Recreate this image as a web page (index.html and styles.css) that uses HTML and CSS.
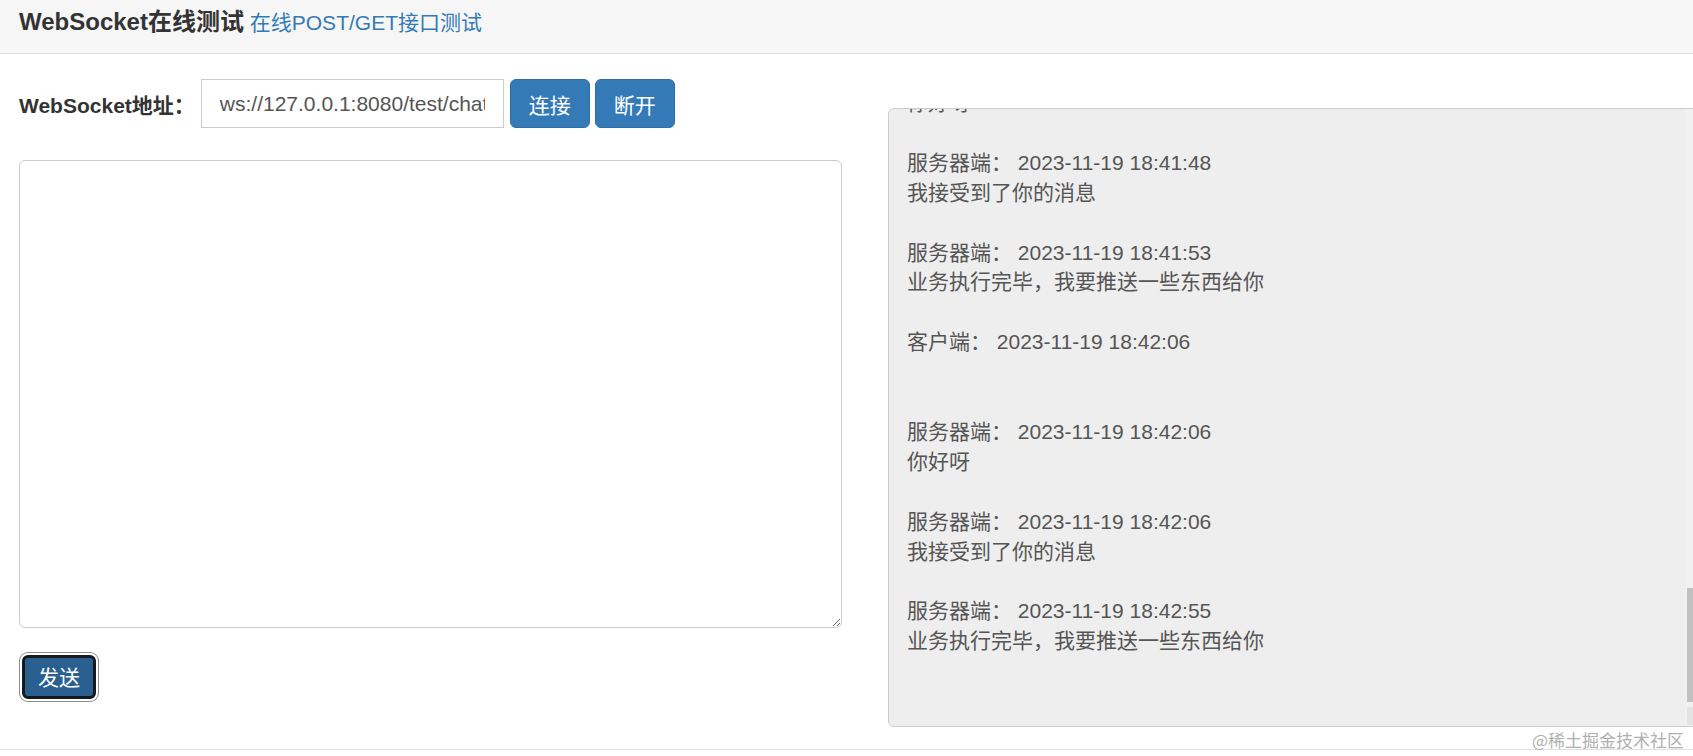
FILE: index.html
```html
<!DOCTYPE html>
<html lang="zh-CN">
<head>
    <meta charset="UTF-8">
    <meta name="viewport" content="width=device-width, initial-scale=1.0">
    <title>WebSocket在线测试</title>
    <link rel="stylesheet" href="styles.css">
</head>
<body>
    <div class="header">
        <span class="brand">WebSocket在线测试</span>
        <a class="sub-link" href="#">在线POST/GET接口测试</a>
    </div>

    <div class="main">
        <div class="left">
            <div class="address-row">
                <label for="url">WebSocket地址：</label>
                <input type="text" id="url" value="ws://127.0.0.1:8080/test/chat">
                <button type="button" class="btn">连接</button>
                <button type="button" class="btn btn-next">断开</button>
            </div>
            <textarea id="message"></textarea>
            <button type="button" class="btn btn-send">发送</button>
        </div>

        <div class="log-pane">
            <div class="log">
                <div class="entry">
                    <div class="line">你好呀</div>
                </div>
                <div class="entry">
                    <div class="line">服务器端： 2023-11-19 18:41:48</div>
                    <div class="line">我接受到了你的消息</div>
                </div>
                <div class="entry">
                    <div class="line">服务器端： 2023-11-19 18:41:53</div>
                    <div class="line">业务执行完毕，我要推送一些东西给你</div>
                </div>
                <div class="entry">
                    <div class="line">客户端： 2023-11-19 18:42:06</div>
                    <div class="line"></div>
                </div>
                <div class="entry">
                    <div class="line">服务器端： 2023-11-19 18:42:06</div>
                    <div class="line">你好呀</div>
                </div>
                <div class="entry">
                    <div class="line">服务器端： 2023-11-19 18:42:06</div>
                    <div class="line">我接受到了你的消息</div>
                </div>
                <div class="entry">
                    <div class="line">服务器端： 2023-11-19 18:42:55</div>
                    <div class="line">业务执行完毕，我要推送一些东西给你</div>
                </div>
            </div>
            <div class="scroll-track">
                <div class="scroll-thumb"></div>
                <div class="scroll-arrow"></div>
            </div>
        </div>
    </div>

    <div class="footer">
        <span class="watermark">@稀土掘金技术社区</span>
    </div>
</body>
</html>
```

FILE: styles.css
```css
body {
    font-family: "Liberation Sans", Arial, "Noto Sans CJK SC", sans-serif;
    font-size: 21px;
    margin: 0;
    padding: 0;
    color: #333;
    background-color: #fff;
    overflow: hidden;
}
.header {
    box-sizing: border-box;
    height: 54px;
    padding: 10px 19px 0;
    line-height: 24px;
    background-color: #f6f6f6;
    border-bottom: 1px solid #e2e2e2;
}
.brand {
    font-size: 24px;
    font-weight: bold;
    color: #333;
}
.sub-link {
    color: #337ab7;
    text-decoration: none;
}
.main {
    display: flex;
    align-items: flex-start;
    padding: 0 0 0 19px;
}
.left {
    width: 823px;
    flex-shrink: 0;
    margin-top: 25px;
}
.address-row {
    display: flex;
    align-items: center;
    height: 49px;
}
.address-row label {
    font-weight: bold;
    margin-right: 6px;
}
.address-row input {
    box-sizing: border-box;
    width: 303px;
    height: 49px;
    padding: 0 18px;
    border: 1px solid #ccc;
    border-radius: 0;
    font-family: inherit;
    font-size: 21px;
    color: #555;
    outline: none;
}
.btn {
    box-sizing: border-box;
    height: 49px;
    margin-left: 6px;
    padding: 0 18px;
    font-family: inherit;
    font-size: 21px;
    color: #fff;
    background-color: #337ab7;
    border: 1px solid #2e6da4;
    border-radius: 6px;
    cursor: pointer;
}
.btn-next {
    margin-left: 5px;
}
textarea {
    display: block;
    box-sizing: border-box;
    width: 823px;
    height: 468px;
    margin-top: 32px;
    border: 1px solid #ccc;
    border-radius: 6px;
    font-family: inherit;
    font-size: 21px;
    outline: none;
}
.btn-send {
    display: block;
    width: 74px;
    height: 44px;
    margin: 27px 0 0 3px;
    padding: 0 0 2px;
    background-color: #2a5f8f;
    border: 3px solid #151a20;
    border-radius: 6px;
    box-shadow: 0 0 0 2px #fff, 0 0 0 3px #8a8a8a;
}
.log-pane {
    position: relative;
    box-sizing: border-box;
    flex-shrink: 0;
    width: 815px;
    height: 619px;
    margin: 54px 0 0 46px;
    padding: 0 18px;
    background-color: #eee;
    border: 1px solid #ccc;
    border-radius: 6px;
    overflow: hidden;
    color: #555;
}
.log {
    margin-top: -21px;
    line-height: 29.9px;
}
.entry {
    margin-bottom: 29.9px;
}
.line {
    min-height: 29.9px;
}
.scroll-track {
    position: absolute;
    top: 0;
    right: 0;
    bottom: 0;
    width: 17px;
    background-color: #f1f1f1;
}
.scroll-thumb {
    position: absolute;
    top: 479px;
    left: 2px;
    width: 13px;
    height: 114px;
    background-color: #c1c1c1;
}
.scroll-arrow {
    position: absolute;
    top: 598px;
    left: 2px;
    width: 13px;
    height: 18px;
    background-color: #e3e3e3;
}
.footer {
    position: relative;
    height: 30px;
    margin-top: 22px;
    border-top: 1px solid #e0e0e0;
}
.watermark {
    position: absolute;
    right: 9px;
    bottom: 100%;
    font-family: "Noto Sans CJK SC", sans-serif;
    font-size: 17px;
    line-height: 21px;
    color: #b0b0b0;
}
```
